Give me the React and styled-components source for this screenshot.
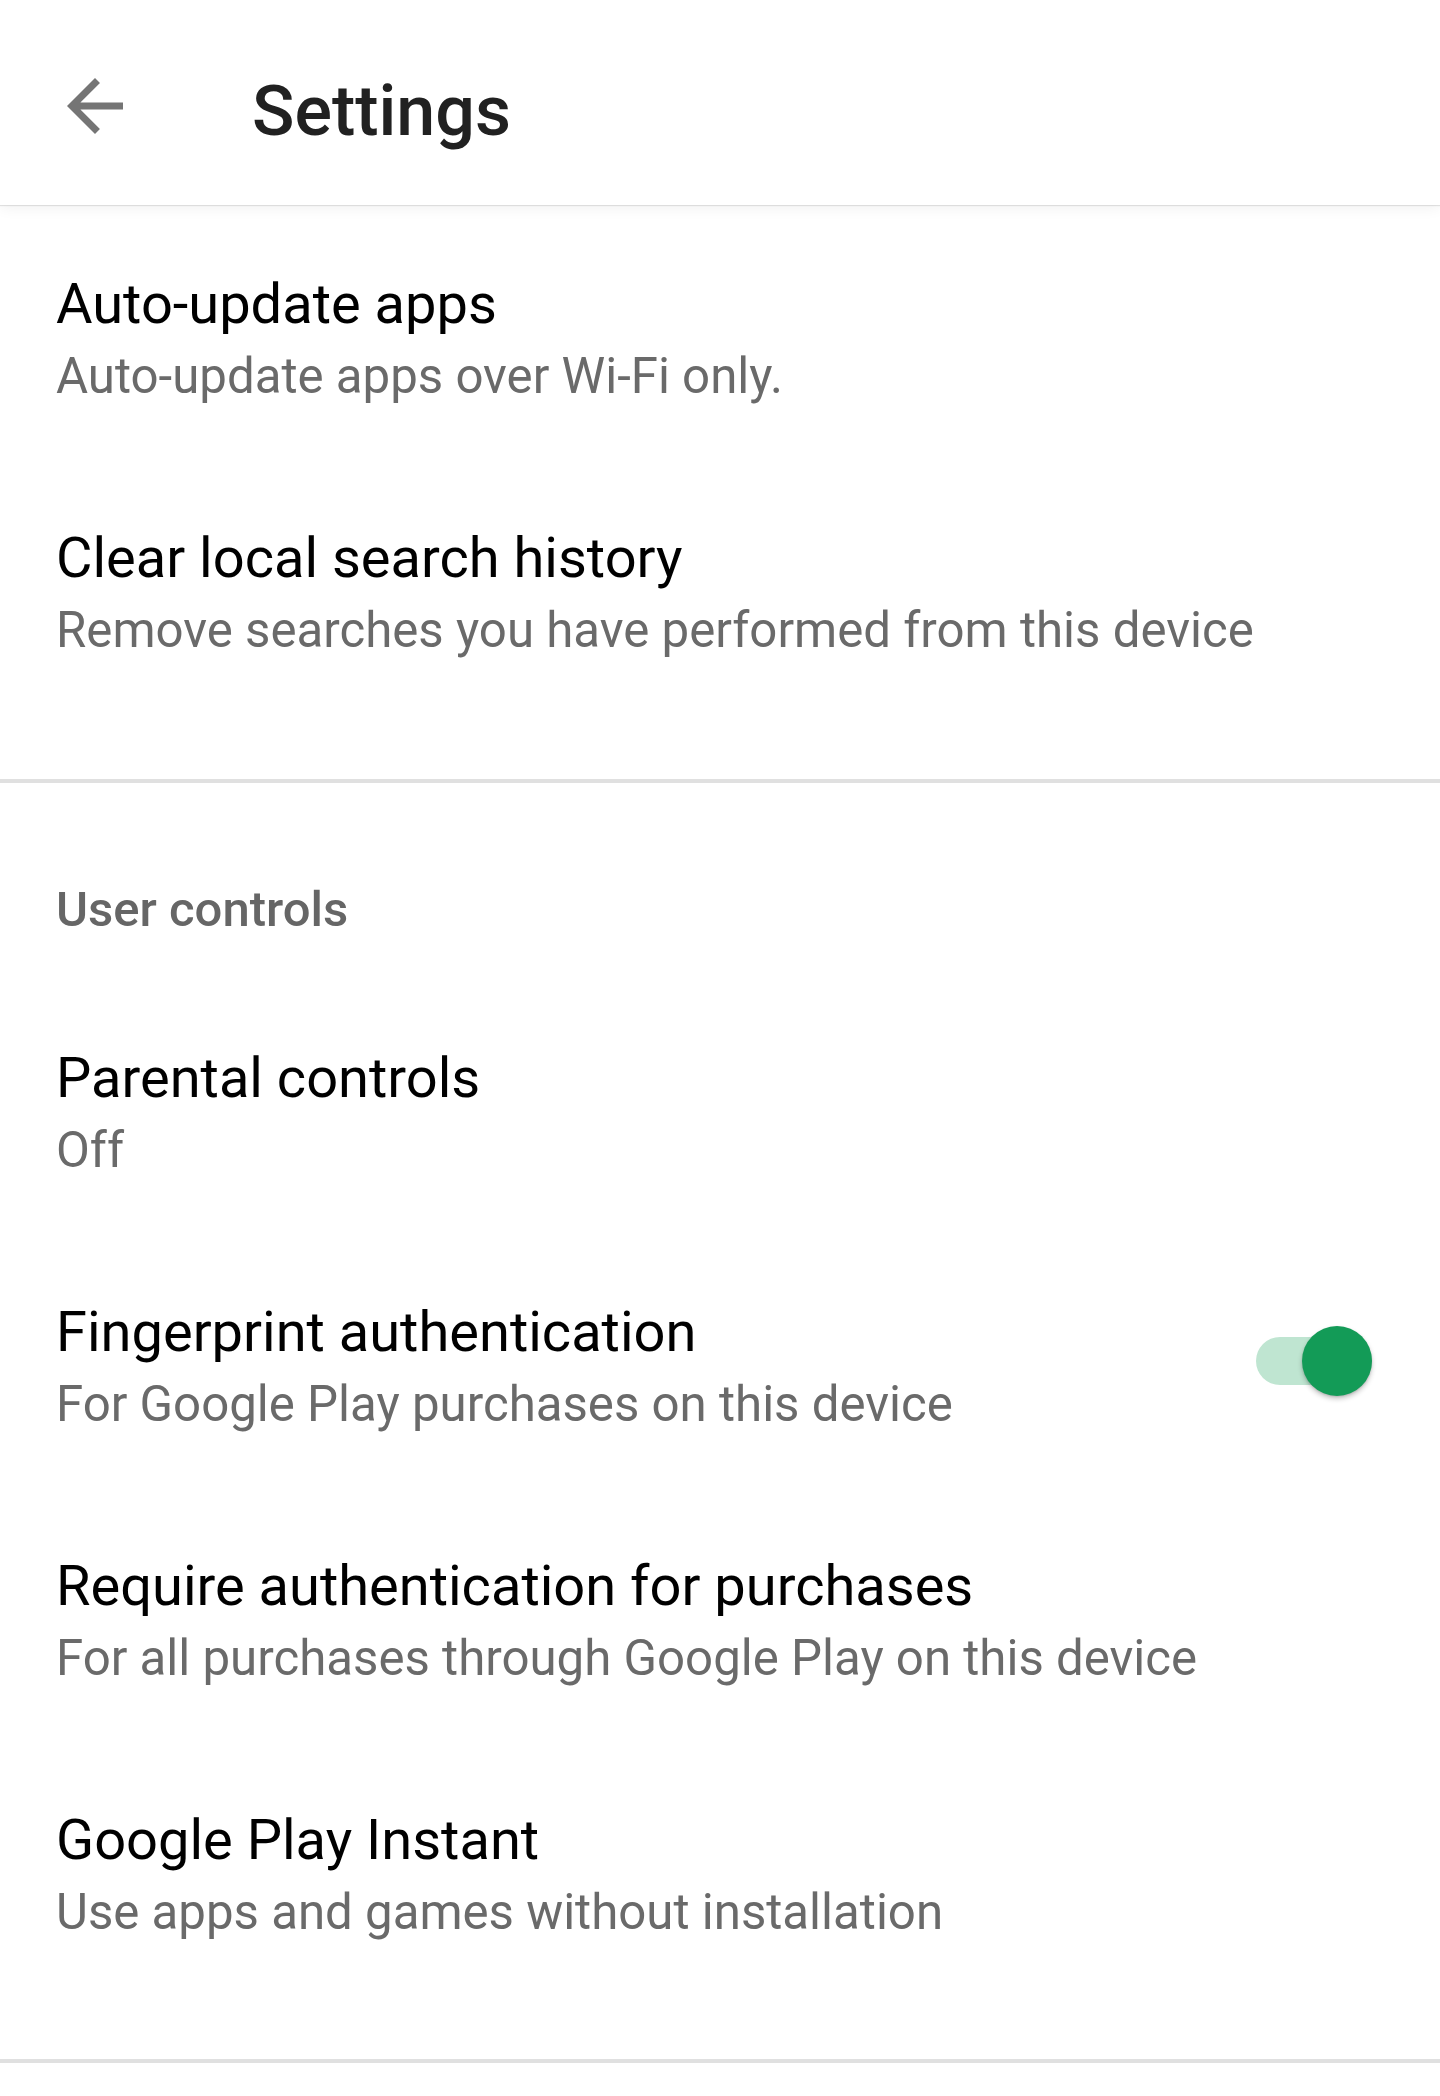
import React from 'react'
import styled, { createGlobalStyle } from 'styled-components'

const GlobalStyle = createGlobalStyle`
  html, body {
    margin: 0;
    padding: 0;
    background: #fff;
  }
  body {
    font-family: Roboto, "Noto Sans", "Liberation Sans", sans-serif;
    -webkit-font-smoothing: antialiased;
  }
`

const Page = styled.div`
  width: 1440px;
  min-height: 2096px;
  background: #fff;
`

const Toolbar = styled.header`
  position: relative;
  z-index: 1;
  box-sizing: border-box;
  height: 205px;
  padding-top: 6px;
  display: flex;
  align-items: center;
  background: #fff;
  box-shadow: 0 1px 1px rgba(0, 0, 0, 0.1), 0 3px 14px rgba(0, 0, 0, 0.06);
`

const BackButton = styled.button`
  width: 84px;
  height: 84px;
  margin-left: 53px;
  padding: 0;
  border: none;
  background: none;
  display: flex;
  align-items: center;
  justify-content: center;
  cursor: pointer;
  svg {
    width: 84px;
    height: 84px;
    fill: #757575;
  }
`

const Title = styled.h1`
  margin: 0 0 0 115px;
  padding-top: 11px;
  font-size: 70px;
  line-height: 82px;
  font-weight: 500;
  color: #212121;
`

const Group = styled.section`
  padding-top: ${(p) => p.top || 0}px;
  padding-bottom: ${(p) => p.bottom}px;
  border-bottom: 4px solid #e0e0e0;
`

const Category = styled.h2`
  margin: 0;
  padding: 98px 56px 46px;
  font-size: 49px;
  line-height: 58px;
  font-weight: 500;
  color: #666;
`

const Row = styled.div`
  box-sizing: border-box;
  height: 254px;
  padding: 0 68px 0 56px;
  display: flex;
  align-items: center;
  cursor: pointer;
`

const Texts = styled.div`
  flex: 1;
  min-width: 0;
`

const RowTitle = styled.div`
  font-size: 56px;
  line-height: 66px;
  color: #000;
`

const RowSummary = styled.div`
  margin-top: 10px;
  font-size: 49.2px;
  line-height: 58px;
  color: #6a6a6a;
`

const Switch = styled.div`
  position: relative;
  width: 116px;
  height: 70px;
  margin-bottom: 10px;
  flex-shrink: 0;
  display: flex;
  align-items: center;
`

const Track = styled.div`
  width: 100%;
  height: 48px;
  border-radius: 24px;
  background: ${(p) => (p.on ? '#bfe5d1' : '#c4c4c4')};
`

const Thumb = styled.div`
  position: absolute;
  top: 0;
  ${(p) => (p.on ? 'right: 0;' : 'left: 0;')}
  width: 70px;
  height: 70px;
  border-radius: 50%;
  background: ${(p) => (p.on ? '#139b57' : '#f1f1f1')};
  box-shadow: 0 3px 5px rgba(0, 0, 0, 0.22), 0 1px 2px rgba(0, 0, 0, 0.12);
`

const Toggle = ({ on }) => (
  <Switch>
    <Track on={on} />
    <Thumb on={on} />
  </Switch>
)

const Pref = ({ title, summary, toggle }) => (
  <Row>
    <Texts>
      <RowTitle>{title}</RowTitle>
      <RowSummary>{summary}</RowSummary>
    </Texts>
    {toggle !== undefined && <Toggle on={toggle} />}
  </Row>
)

const general = [
  { title: 'Auto-update apps', summary: 'Auto-update apps over Wi-Fi only.' },
  { title: 'Clear local search history', summary: 'Remove searches you have performed from this device' },
]

const userControls = [
  { title: 'Parental controls', summary: 'Off' },
  { title: 'Fingerprint authentication', summary: 'For Google Play purchases on this device', toggle: true },
  { title: 'Require authentication for purchases', summary: 'For all purchases through Google Play on this device' },
  { title: 'Google Play Instant', summary: 'Use apps and games without installation' },
]

export default function App() {
  return (
    <Page>
      <GlobalStyle />
      <Toolbar>
        <BackButton aria-label="Back">
          <svg viewBox="0 0 24 24">
            <path d="M20 11H7.83l5.59-5.59L12 4l-8 8 8 8 1.41-1.41L7.83 13H20v-2z" />
          </svg>
        </BackButton>
        <Title>Settings</Title>
      </Toolbar>

      <Group top={6} bottom={60}>
        {general.map((p) => <Pref key={p.title} {...p} />)}
      </Group>

      <Group bottom={58}>
        <Category>User controls</Category>
        {userControls.map((p) => <Pref key={p.title} {...p} />)}
      </Group>
    </Page>
  )
}
